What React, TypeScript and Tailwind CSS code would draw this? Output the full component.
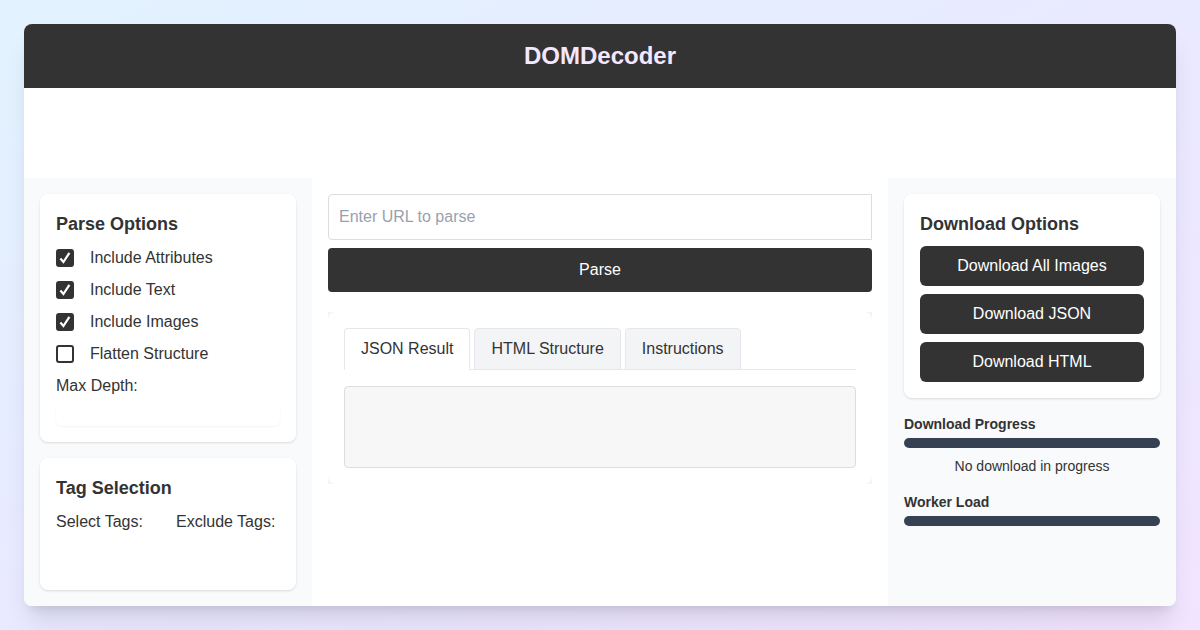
import React, { useState } from "react";

const parseOptions = [
  { id: "attributes", label: "Include Attributes", checked: true },
  { id: "text", label: "Include Text", checked: true },
  { id: "images", label: "Include Images", checked: true },
  { id: "flatten", label: "Flatten Structure", checked: false },
];

const tabs = ["JSON Result", "HTML Structure", "Instructions"];

const downloads = ["Download All Images", "Download JSON", "Download HTML"];

function Card({ title, children }: { title: string; children: React.ReactNode }) {
  return (
    <section className="rounded-lg bg-white p-4 shadow-sm">
      <h2 className="mb-2 text-lg font-bold">{title}</h2>
      {children}
    </section>
  );
}

function OptionCheckbox({ id, label, checked }: { id: string; label: string; checked: boolean }) {
  return (
    <label htmlFor={id} className="flex items-center gap-4">
      <span className="relative grid size-[18px] shrink-0">
        <input
          id={id}
          type="checkbox"
          defaultChecked={checked}
          className="peer size-full appearance-none rounded-[3px] border-2 border-[#333] bg-white checked:bg-[#333]"
        />
        <svg
          viewBox="0 0 18 18"
          fill="none"
          stroke="white"
          strokeWidth="2.2"
          className="pointer-events-none absolute inset-0 hidden size-full peer-checked:block"
        >
          <path d="M4.4 9.6 7.4 13 13.4 3.9" />
        </svg>
      </span>
      {label}
    </label>
  );
}

function Meter({ title, value, status }: { title: string; value: number; status?: string }) {
  return (
    <section className="text-sm">
      <h3 className="mb-1 font-bold">{title}</h3>
      <div
        role="progressbar"
        aria-label={title}
        aria-valuenow={value}
        className="h-[10px] overflow-hidden rounded-full bg-gray-700"
      >
        <div className="h-full bg-[#f3e8ff]" style={{ width: `${value}%` }} />
      </div>
      {status && <p className="mt-2 text-center">{status}</p>}
    </section>
  );
}

export default function App() {
  const [active, setActive] = useState(tabs[0]);

  return (
    <div className="flex min-h-screen flex-col bg-[linear-gradient(to_bottom_right,#e2f3ff,#e9e9ff,#f1e4ff)] p-6 font-['Liberation_Sans',Arial,sans-serif] text-base text-[#333]">
      <div className="flex flex-1 flex-col overflow-hidden rounded-lg bg-white shadow-xl">
        <header className="bg-[#333] p-4 text-center">
          <h1 className="text-2xl font-bold text-[#f3e8ff]">DOMDecoder</h1>
        </header>
        <div className="h-[90px]" />
        <div className="grid flex-1 grid-cols-[1fr_2fr_1fr]">
          <aside className="flex flex-col gap-4 bg-slate-50 p-4">
            <Card title="Parse Options">
              <div className="flex flex-col gap-2">
                {parseOptions.map((option) => (
                  <OptionCheckbox key={option.id} {...option} />
                ))}
                <label htmlFor="depth">Max Depth:</label>
              </div>
              <input
                id="depth"
                type="text"
                className="mt-1 block h-6 w-full rounded-md bg-white px-2 text-sm shadow-[0_1px_2px_rgba(0,0,0,0.05)]"
              />
            </Card>
            <Card title="Tag Selection">
              <div className="grid grid-cols-2 gap-4">
                <div>
                  <label htmlFor="select-tags" className="block whitespace-nowrap">
                    Select Tags:
                  </label>
                  <select id="select-tags" multiple className="block h-10 w-full bg-white" />
                </div>
                <div>
                  <label htmlFor="exclude-tags" className="block whitespace-nowrap">
                    Exclude Tags:
                  </label>
                  <select id="exclude-tags" multiple className="block h-10 w-full bg-white" />
                </div>
              </div>
            </Card>
          </aside>

          <main className="min-w-0 p-4">
            <form className="flex flex-col gap-2" onSubmit={(e) => e.preventDefault()}>
              <input
                type="url"
                aria-label="URL to parse"
                placeholder="Enter URL to parse"
                className="h-[46px] w-full rounded-l border border-[#ddd] bg-white px-[10px] placeholder:text-gray-400"
              />
              <button type="submit" className="h-11 w-full rounded bg-[#333] text-white">
                Parse
              </button>
            </form>
            <div className="mt-5 bg-gray-100">
              <div className="rounded-lg bg-white p-4">
                <div role="tablist" className="flex gap-1 border-b border-gray-200">
                  {tabs.map((tab) => (
                    <button
                      key={tab}
                      type="button"
                      role="tab"
                      aria-selected={tab === active}
                      onClick={() => setActive(tab)}
                      className={
                        tab === active
                          ? "-mb-px rounded-t border border-gray-200 border-b-white bg-white px-4 py-2"
                          : "-mb-px rounded-t border border-gray-200 bg-gray-100 px-4 py-2"
                      }
                    >
                      {tab}
                    </button>
                  ))}
                </div>
                <div
                  role="tabpanel"
                  aria-label={active}
                  className="mt-4 h-[82px] rounded border border-[#ddd] bg-[#f7f7f7]"
                />
              </div>
            </div>
          </main>

          <aside className="flex flex-col gap-4 bg-slate-50 p-4">
            <Card title="Download Options">
              <div className="flex flex-col gap-2">
                {downloads.map((name) => (
                  <button key={name} type="button" className="h-10 rounded-md bg-[#333] text-white">
                    {name}
                  </button>
                ))}
              </div>
            </Card>
            <Meter title="Download Progress" value={0} status="No download in progress" />
            <Meter title="Worker Load" value={0} />
          </aside>
        </div>
      </div>
    </div>
  );
}
